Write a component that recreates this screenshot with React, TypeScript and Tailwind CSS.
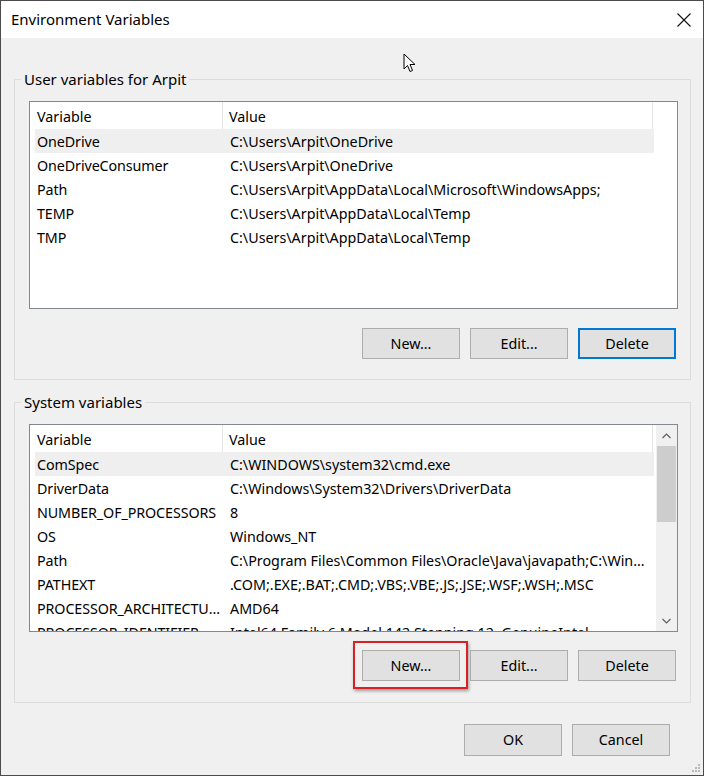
import React from 'react';

// Types
interface EnvVar {
  name: string;
  value: string;
}

const userVars: EnvVar[] = [
  { name: 'OneDrive', value: 'C:\\Users\\Arpit\\OneDrive' },
  { name: 'OneDriveConsumer', value: 'C:\\Users\\Arpit\\OneDrive' },
  { name: 'Path', value: 'C:\\Users\\Arpit\\AppData\\Local\\Microsoft\\WindowsApps;' },
  { name: 'TEMP', value: 'C:\\Users\\Arpit\\AppData\\Local\\Temp' },
  { name: 'TMP', value: 'C:\\Users\\Arpit\\AppData\\Local\\Temp' },
];

const systemVars: EnvVar[] = [
  { name: 'ComSpec', value: 'C:\\WINDOWS\\system32\\cmd.exe' },
  { name: 'DriverData', value: 'C:\\Windows\\System32\\Drivers\\DriverData' },
  { name: 'NUMBER_OF_PROCESSORS', value: '8' },
  { name: 'OS', value: 'Windows_NT' },
  { name: 'Path', value: 'C:\\Program Files\\Common Files\\Oracle\\Java\\javapath;C:\\Win...' },
  { name: 'PATHEXT', value: '.COM;.EXE;.BAT;.CMD;.VBS;.VBE;.JS;.JSE;.WSF;.WSH;.MSC' },
  { name: 'PROCESSOR_ARCHITECTURE', value: 'AMD64' },
  { name: 'PROCESSOR_IDENTIFIER', value: 'Intel64 Family 6 Model 142 Stepping 12, GenuineIntel' },
];

const font = "font-['Noto_Sans',sans-serif]";

// Win10 push button
const WinButton: React.FC<{ label: string; focused?: boolean; highlight?: boolean; className?: string }> = ({
  label,
  focused,
  highlight,
  className,
}) => (
  <button
    className={`relative h-[31px] w-[98px] bg-[#e1e1e1] text-[14.3px] text-black ${
      focused ? 'border-2 border-[#0078d7]' : 'border border-[#adadad]'
    } ${className ?? ''}`}
  >
    {label}
    {highlight && (
      <span className="pointer-events-none absolute -left-[10px] -top-[10px] -right-[9px] -bottom-[9px] border-2 border-[#dc1f26] shadow-[1px_2px_3px_rgba(0,0,0,0.35)]" />
    )}
  </button>
);

// List view with two columns
const VarList: React.FC<{ vars: EnvVar[]; scrollbar?: boolean }> = ({ vars, scrollbar }) => (
  <div className="flex h-[208px] border border-[#828790] bg-white">
    <div className="flex-1 overflow-hidden">
      <div className="flex h-[27px]">
        <div className="h-full w-[193px] border-r border-[#e5e5e5] pl-[7px] pt-[2px] leading-[26px]">Variable</div>
        <div className="h-full w-[430px] border-r border-[#e5e5e5] pl-[6px] pt-[2px] leading-[26px]">Value</div>
      </div>
      {vars.map((v, i) => (
        <div
          key={v.name}
          className={`ml-[5px] flex h-[24px] w-[619px] items-center pt-[1px] ${i === 0 ? 'bg-[#efefef]' : ''}`}
        >
          <div className="w-[189px] truncate pl-[2px] tracking-[-0.1px]">{v.name}</div>
          <div className="flex-1 truncate pl-[6px]">{v.value}</div>
        </div>
      ))}
    </div>
    {scrollbar && (
      <div className="flex w-[21px] flex-col items-center bg-[#f0f0f0]">
        <div className="flex h-[21px] w-full items-center justify-center">
          <svg width="9" height="6" viewBox="0 0 9 6" fill="none" stroke="#606060" strokeWidth="1.2">
            <path d="M0.5 5 L4.5 1 L8.5 5" />
          </svg>
        </div>
        <div className="h-[76px] w-[19px] bg-[#cdcdcd]" />
        <div className="flex-1" />
        <div className="flex h-[21px] w-full items-center justify-center">
          <svg width="9" height="6" viewBox="0 0 9 6" fill="none" stroke="#606060" strokeWidth="1.2">
            <path d="M0.5 1 L4.5 5 L8.5 1" />
          </svg>
        </div>
      </div>
    )}
  </div>
);

const GroupBox: React.FC<{ title: string; children: React.ReactNode; className?: string }> = ({
  title,
  children,
  className,
}) => (
  <fieldset className={`ml-[13px] mr-[12px] border border-[#dcdcdc] pl-[14px] pr-[12px] ${className ?? ''}`}>
    <legend className="-ml-[8px] px-[3px] text-[15px] leading-[20px]">{title}</legend>
    {children}
  </fieldset>
);

export default function App() {
  return (
    <div className={`h-[777px] w-[706px] bg-white ${font} text-[14.3px] text-black`}>
      <div className="relative flex h-[776px] w-[704px] flex-col border border-[#4b4b4b]">
        {/* Title bar */}
        <div className="flex h-[37px] items-center justify-between bg-white pl-[10px] pr-[12px]">
          <span className="text-[15px]">Environment Variables</span>
          <svg width="14" height="14" viewBox="0 0 14 14" stroke="#111" strokeWidth="1.1">
            <path d="M0.5 0.5 L13.5 13.5 M13.5 0.5 L0.5 13.5" />
          </svg>
        </div>

        {/* Body */}
        <div className="flex flex-1 flex-col bg-[#f0f0f0] pt-[31px]">
          <GroupBox title="User variables for Arpit" className="pt-[12px] pb-[20px]">
            <VarList vars={userVars} />
            <div className="mt-[19px] mr-[2px] flex justify-end gap-[10px]">
              <WinButton label="New..." />
              <WinButton label="Edit..." />
              <WinButton label="Delete" focused />
            </div>
          </GroupBox>

          <GroupBox title="System variables" className="mt-[12px] pt-[12px] pb-[21px]">
            <VarList vars={systemVars} scrollbar />
            <div className="mt-[18px] mr-[2px] flex justify-end gap-[10px]">
              <WinButton label="New..." highlight />
              <WinButton label="Edit..." />
              <WinButton label="Delete" />
            </div>
          </GroupBox>

          <div className="mt-[21px] mr-[33px] flex justify-end gap-[10px]">
            <WinButton label="OK" className="h-[32px]" />
            <WinButton label="Cancel" className="h-[32px]" />
          </div>

          {/* resize grip */}
          <svg className="absolute bottom-[2px] right-[2px]" width="10" height="10" viewBox="0 0 10 10" fill="#b8b8b8">
            <rect x="7" y="1" width="2" height="2" />
            <rect x="4" y="4" width="2" height="2" />
            <rect x="7" y="4" width="2" height="2" />
            <rect x="1" y="7" width="2" height="2" />
            <rect x="4" y="7" width="2" height="2" />
            <rect x="7" y="7" width="2" height="2" />
          </svg>
        </div>

        {/* mouse pointer */}
        <svg className="absolute left-[402px] top-[52px]" width="14" height="21" viewBox="0 0 14 21">
          <path
            d="M1 1 L1 16 L4.5 12.5 L7 18.5 L9.5 17.5 L7 11.5 L12 11.5 Z"
            fill="#fff"
            stroke="#000"
            strokeWidth="1"
            strokeLinejoin="miter"
          />
        </svg>
      </div>
    </div>
  );
}
